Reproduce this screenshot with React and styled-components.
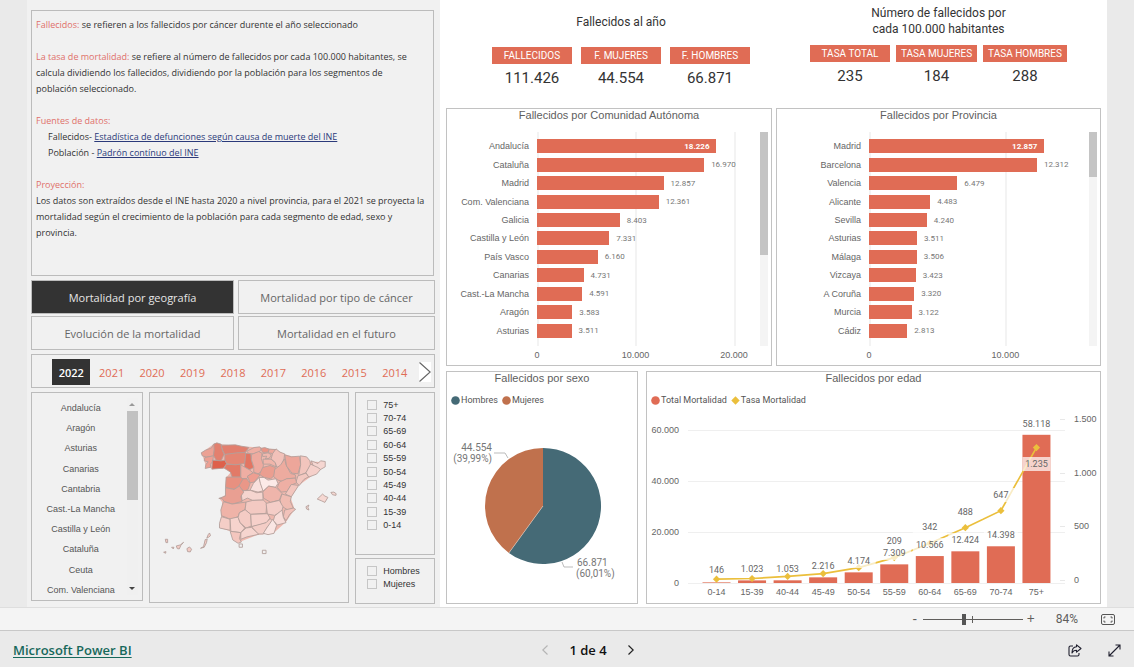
import React from "react";
import styled, { createGlobalStyle, css } from "styled-components";

const coral = "#e06c55";
const ui = '"Open Sans", "Noto Sans", sans-serif';
const din = 'Roboto, "Open Sans", sans-serif';
const arial = '"Liberation Sans", Arial, sans-serif';

const GlobalStyle = createGlobalStyle`
  *, *::before, *::after { box-sizing: border-box; }
  body { margin: 0; background: #eaeaea; font-family: ${ui}; color: #333; }
  h2, p, ul, dl, dd, dt, fieldset { margin: 0; padding: 0; border: 0; }
  ul { list-style: none; }
  button { font: inherit; color: inherit; background: none; border: 0; padding: 0; cursor: pointer; }
  svg { display: block; }
`;

const Page = styled.div`
  min-height: 100vh;
  display: flex;
  flex-direction: column;
`;

const Report = styled.main`
  flex: 1;
  display: grid;
  grid-template-columns: 413fr 667fr;
  padding: 0 27px;
`;

const Sidebar = styled.section`
  background: #f1f1f1;
  padding: 10px 5px 3px 4px;
  display: flex;
  flex-direction: column;
  gap: 4px;
`;

const box = css`
  border: 1px solid #bcbcbc;
`;

const InfoBox = styled.article`
  ${box}
  min-height: 266px;
  margin-right: 1px;
  padding: 6px 2px 6px 4px;
  font-size: 9px;
  line-height: 16px;
  color: #333;
`;

const InfoText = styled.p`
  margin-bottom: 16px;
`;

const Term = styled.strong`
  font-weight: 500;
  color: #e0706a;
`;

const Source = styled.span`
  display: block;
  padding-left: 12px;
`;

const SourceLink = styled.a`
  color: #2b3a7a;
`;

const TabGrid = styled.nav`
  display: grid;
  grid-template-columns: 203fr 197fr;
  grid-auto-rows: 34px;
  gap: 2px 4px;
`;

const TabButton = styled.button`
  ${box}
  font-size: 11px;
  color: ${(p) => (p.$active ? "#e6e6e6" : "#666")};
  background: ${(p) => (p.$active ? "#333" : "transparent")};
`;

const YearBar = styled.div`
  ${box}
  height: 34px;
  display: flex;
  align-items: center;
  padding: 2px 3px 0 20px;
`;

const YearList = styled.div`
  flex: 1;
  display: flex;
  gap: 2px;
  margin-right: 5px;
`;

const YearButton = styled.button`
  flex: 1;
  height: 26px;
  font-size: 11px;
  font-weight: ${(p) => (p.$active ? 600 : 400)};
  color: ${(p) => (p.$active ? "#fff" : coral)};
  background: ${(p) => (p.$active ? "#333" : "transparent")};
`;

const NextYears = styled.button`
  background: #fff;
`;

const FilterRow = styled.div`
  flex: 1;
  display: grid;
  grid-template-columns: 112fr 201fr 80fr;
  gap: 6px;
`;

const RegionBox = styled.div`
  ${box}
  display: flex;
  margin-bottom: 3px;
  padding: 5px 4px 0 3px;
`;

const RegionList = styled.ul`
  flex: 1;
  display: grid;
  grid-template-rows: repeat(10, 1fr);
`;

const RegionItem = styled.li`
  display: grid;
`;

const RegionButton = styled.button`
  font: 9px ${arial};
  color: #555;
`;

const RegionScroll = styled.div`
  width: 11px;
  display: flex;
  flex-direction: column;
  align-items: center;
  margin-bottom: 5px;
  padding: 5px 0;
  background: #f0f0f0;
`;

const RegionThumb = styled.div`
  width: 11px;
  height: 89px;
  margin: 5px 0 auto;
  background: #c1c1c1;
`;

const Arrow = styled.span`
  border: 3px solid transparent;
  border-top-width: ${(p) => (p.$up ? 0 : "3px")};
  border-bottom-width: ${(p) => (p.$up ? "3px" : 0)};
  border-top-color: ${(p) => (p.$up ? "transparent" : "#444")};
  border-bottom-color: ${(p) => (p.$up ? "#999" : "transparent")};
`;

const MapBox = styled.div`
  ${box}
  margin-bottom: 1px;
`;

const CheckColumn = styled.div`
  display: flex;
  flex-direction: column;
  gap: 3px;
`;

const CheckBox = styled.fieldset`
  && {
    ${box}
    padding: 5px 0 ${(p) => (p.$grow ? 0 : "12px")} 11px;
  }
  flex: ${(p) => (p.$grow ? 1 : "none")};
  min-width: 0;
`;

const CheckList = styled.div`
  display: grid;
  grid-template-rows: ${(p) => `repeat(${p.$rows}, 1fr)`};
  height: ${(p) => (p.$rows === 10 ? "134px" : "27px")};
`;

const CheckLabel = styled.label`
  display: flex;
  align-items: center;
  gap: 6px;
  font: 9px ${arial};
  color: #333;
`;

const Check = styled.input`
  appearance: none;
  width: 10px;
  height: 10px;
  margin: 0;
  border: 1px solid #c6c6c6;
`;

const Main = styled.section`
  background: #fff;
  padding: 0 6px 3px;
  display: flex;
  flex-direction: column;
`;

const Kpis = styled.div`
  min-height: 108px;
  display: flex;
  justify-content: space-between;
  padding: 5px 34px 0 46px;
`;

const KpiGroup = styled.section`
  display: flex;
  flex-direction: column;
  align-items: center;
`;

const KpiTitle = styled.h2`
  height: ${(p) => (p.$tall ? "40px" : "42px")};
  padding-top: ${(p) => (p.$tall ? 0 : "9px")};
  font: 12px/16px ${din};
  text-align: center;
  color: #333;
  max-width: 150px;
`;

const KpiCards = styled.dl`
  display: grid;
  grid-template-columns: ${(p) => p.$columns};
  gap: ${(p) => p.$gap};
`;

const KpiCard = styled.div`
  text-align: center;
`;

const KpiName = styled.dt`
  background: ${coral};
  color: #fff;
  font: 10px/17px ${din};
`;

const KpiValue = styled.dd`
  margin-top: 6px;
  font: 15px/17px ${din};
  color: #333;
`;

const ChartRow = styled.div`
  display: grid;
  grid-template-columns: ${(p) => p.$columns};
  gap: ${(p) => p.$gap};
  margin-bottom: ${(p) => p.$after || 0};
`;

const Panel = styled.section`
  border: 1px solid #c2c2c2;
  min-width: 0;
`;

const PanelTitle = styled.h2`
  font: 11px/13px ${arial};
  text-align: center;
  color: #5e5e5e;
`;

const BarBody = styled.div`
  display: grid;
  grid-template-columns: ${(p) => p.$label} 1fr 8px;
  grid-template-rows: 214px 19px;
  padding: 10px 3px 0 0;
`;

const GridLayer = styled.div`
  grid-area: 1 / 2 / 3 / 3;
  display: flex;
  margin-right: 2px;
`;

const Tick = styled.div`
  flex: none;
  display: flex;
  flex-direction: column;
`;

const TickLine = styled.span`
  height: 214px;
  border-left: 2px solid #f3f3f3;
`;

const TickText = styled.span`
  width: 0;
  display: flex;
  justify-content: center;
  font: 9px/18px ${arial};
  color: #666;
`;

const Rows = styled.ul`
  grid-area: 1 / 1 / 2 / 3;
  display: grid;
  grid-auto-rows: 1fr;
  margin-right: 2px;
  && { padding: 5px 0 6px; }
`;

const Row = styled.li`
  display: grid;
  grid-template-columns: ${(p) => p.$label} 1fr;
  align-items: center;
`;

const RowName = styled.span`
  padding-right: 8px;
  text-align: right;
  font: 9px ${arial};
  color: #666;
`;

const RowTrack = styled.span`
  display: flex;
  align-items: center;
`;

const Bar = styled.span`
  flex: none;
  height: 14px;
  display: flex;
  align-items: center;
  justify-content: flex-end;
  padding-right: 7px;
  background: ${coral};
  font: bold 8px ${din};
  color: #fff;
`;

const BarValue = styled.span`
  margin-left: 7px;
  font: 8px ${din};
  color: #777;
`;

const ScrollTrack = styled.div`
  grid-area: 1 / 3 / 2 / 4;
  background: #f4f4f4;
`;

const ScrollThumb = styled.div`
  width: 8px;
  height: ${(p) => p.$height};
  background: #c4c4c4;
`;

const Legend = styled.ul`
  display: flex;
  gap: 4px;
  && { margin: 9px 0 4px 4px; }
`;

const LegendItem = styled.li`
  display: flex;
  align-items: center;
  gap: 1px;
  font: 9px/12px ${din};
  color: #555;
`;

const StatusBar = styled.div`
  height: 24px;
  display: flex;
  align-items: center;
  justify-content: flex-end;
  padding: 0 19px;
  background: #f4f4f4;
  border-top: 1px solid #dedede;
  border-bottom: 1px solid #c8c8c8;
  font-size: 12px;
  color: #605e5c;
`;

const ZoomStep = styled.button`
  width: 16px;
  height: 20px;
  font-size: 14px;
  line-height: 18px;
`;

const ZoomRange = styled.input`
  appearance: none;
  width: 100px;
  height: 11px;
  margin: 0;
  background:
    linear-gradient(#605e5c, #605e5c) 49px 2px / 1px 7px no-repeat,
    linear-gradient(#605e5c, #605e5c) 0 5px / 100% 1px no-repeat;
  &::-webkit-slider-thumb {
    appearance: none;
    width: 4px;
    height: 11px;
    background: #555;
  }
`;

const ZoomValue = styled.output`
  margin: 0 23px 0 17px;
  font: 12px ${din};
`;

const Footer = styled.footer`
  height: 36px;
  display: grid;
  grid-template-columns: 1fr auto 1fr;
  align-items: center;
  padding: 2px 13px 0;
`;

const BrandLink = styled.a`
  justify-self: start;
  font-size: 13px;
  font-weight: 600;
  color: #17685b;
  text-underline-offset: 2px;
`;

const Pager = styled.nav`
  display: flex;
  align-items: center;
  gap: 21px;
  padding-left: 42px;
  font-size: 13px;
  font-weight: 600;
  color: #111;
`;

const Actions = styled.div`
  justify-self: end;
  display: flex;
  gap: 26px;
`;

const communities = [
  ["Andalucía", 18226], ["Cataluña", 16970], ["Madrid", 12857], ["Com. Valenciana", 12361],
  ["Galicia", 8403], ["Castilla y León", 7331], ["País Vasco", 6160], ["Canarias", 4731],
  ["Cast.-La Mancha", 4591], ["Aragón", 3583], ["Asturias", 3511],
];

const provinces = [
  ["Madrid", 12857], ["Barcelona", 12312], ["Valencia", 6479], ["Alicante", 4483],
  ["Sevilla", 4240], ["Asturias", 3511], ["Málaga", 3506], ["Vizcaya", 3423],
  ["A Coruña", 3320], ["Murcia", 3122], ["Cádiz", 2813],
];

const regions = [
  "Andalucía", "Aragón", "Asturias", "Canarias", "Cantabria",
  "Cast.-La Mancha", "Castilla y León", "Cataluña", "Ceuta", "Com. Valenciana",
];

const years = [2022, 2021, 2020, 2019, 2018, 2017, 2016, 2015, 2014];
const ageFilters = ["75+", "70-74", "65-69", "60-64", "55-59", "50-54", "45-49", "40-44", "15-39", "0-14"];

/* age group, deaths, deaths label y, rate, rate label y */
const ages = [
  ["0-14", 146, 160, 8],
  ["15-39", 1023, 159, 14],
  ["40-44", 1053, 159, 33],
  ["45-49", 2216, 156, 60],
  ["50-54", 4174, 151, 115],
  ["55-59", 7309, 143, 209, 131],
  ["60-64", 10566, 135, 342, 117],
  ["65-69", 12424, 130, 488, 102],
  ["70-74", 14398, 125, 647, 85],
  ["75+", 58118, 14, 1235, 54],
];

const fmt = (n) => String(n).replace(/\B(?=(\d{3})+$)/g, ".");

function BarChart({ title, data, domain, ticks, label, thumb }) {
  return (
    <Panel>
      <PanelTitle>{title}</PanelTitle>
      <BarBody $label={label}>
        <GridLayer>
          {ticks.map((t) => (
            <Tick key={t} style={{ width: `${(10000 / domain) * 100}%` }}>
              <TickLine />
              <TickText>{fmt(t)}</TickText>
            </Tick>
          ))}
        </GridLayer>
        <Rows>
          {data.map(([name, value], i) => (
            <Row key={name} $label={label}>
              <RowName>{name}</RowName>
              <RowTrack>
                <Bar style={{ width: `${(value / domain) * 100}%` }}>{i === 0 && fmt(value)}</Bar>
                {i > 0 && <BarValue>{fmt(value)}</BarValue>}
              </RowTrack>
            </Row>
          ))}
        </Rows>
        <ScrollTrack><ScrollThumb $height={thumb} /></ScrollTrack>
      </BarBody>
    </Panel>
  );
}

function PieChart() {
  const text = { fontFamily: "Roboto", fontSize: 10, fill: "#777", dominantBaseline: "central" };
  return (
    <svg viewBox="0 0 190 193" width="100%" role="img" aria-label="Fallecidos por sexo">
      <path d="M96 96V38A58 58 0 1 1 61.9 142.9Z" fill="#456a76" />
      <path d="M96 96L61.9 142.9A58 58 0 0 1 96 38Z" fill="#c0714d" />
      <path d="M96 96L61.9 142.9" stroke="#d9c9c0" strokeWidth=".6" />
      <path d="M47 43H58L61 48M115 152L117 157H126" fill="none" stroke="#bbb" />
      <text x="45" y="37" textAnchor="end" {...text}>44.554</text>
      <text x="45" y="48" textAnchor="end" {...text}>(39,99%)</text>
      <text x="130" y="152" {...text}>66.871</text>
      <text x="129" y="163" {...text}>(60,01%)</text>
    </svg>
  );
}

function AgeChart() {
  const x = (i) => 69.5 + 35.55 * i;
  const yBar = (v) => 173 - v * 0.00255;
  const yRate = (v) => 170 - v * 0.1072;
  const axis = { fontFamily: "Liberation Sans", fontSize: 9, fill: "#666", dominantBaseline: "central" };
  const value = { fontFamily: "Roboto", fontSize: 9, fill: "#666", textAnchor: "middle", dominantBaseline: "central" };
  return (
    <svg viewBox="0 0 453 193" width="100%" role="img" aria-label="Fallecidos por edad">
      {[0, 20000, 40000, 60000].map((t) => (
        <g key={t}>
          <path d={`M41 ${yBar(t) + 0.5}H418`} stroke="#efefef" />
          <text x="32" y={yBar(t)} textAnchor="end" {...axis}>{fmt(t)}</text>
        </g>
      ))}
      {[0, 500, 1000, 1500].map((t) => (
        <g key={t}>
          <path d={`M413 ${Math.round(yRate(t)) + 0.5}H418`} stroke="#e8e8e8" />
          <text x="427" y={yRate(t)} {...axis}>{fmt(t)}</text>
        </g>
      ))}
      {ages.map(([name, v], i) => (
        <g key={name}>
          <rect x={x(i) - 14} y={Math.min(yBar(v), 172)} width="28" height={Math.max(v * 0.00255, 1)} fill={v < 500 ? "#eba393" : coral} />
          <text x={x(i)} y="182" textAnchor="middle" {...axis}>{name}</text>
        </g>
      ))}
      <polyline points={ages.map((a, i) => `${x(i)},${yRate(a[3])}`).join(" ")} fill="none" stroke="#ebbf3c" strokeWidth="1.7" />
      {ages.map((a, i) => (
        <path key={a[0]} d={`M${x(i)} ${yRate(a[3]) - 3.6}l3.6 3.6l-3.6 3.6l-3.6 -3.6z`} fill="#ebbf3c" />
      ))}
      {ages.map(([name, v, ly, rate, ry], i) => (
        <g key={name}>
          {i > 3 && i < 9 && <rect x={x(i) - 17} y={ly - 7} width="34" height="14" fill="#fff" opacity=".7" />}
          {ry && <rect x={x(i) - (i === 9 ? 14 : 17)} y={ry - 7} width={i === 9 ? 28 : 34} height="14" fill="#fff" opacity=".7" />}
          <text x={x(i)} y={ly} {...value}>{fmt(v)}</text>
          {ry && <text x={x(i)} y={ry} {...value}>{fmt(rate)}</text>}
        </g>
      ))}
    </svg>
  );
}

const mainland =
  "170,204 206,178 229,178 290,184 348,188 394,194 420,208 498,230 542,232 528,254 462,302 438,340 450,374 424,412 386,446 340,450 280,474 258,440 226,430 232,352 224,342 242,330 244,278 258,262 240,250 204,252 184,246";

const mapShapes = [
  ["#eca194", "169,204 182,196 200,189 206,178 214,176 208,198 206,213 186,217 172,213"],
  ["#e3806e", "207,178 216,174 229,178 232,195 238,208 229,228 214,226 206,212 208,196"],
  ["#ee9f92", "180,218 206,213 203,232 196,238 198,247 181,251 183,239 190,231 178,228"],
  ["#de604b", "203,226 229,228 240,226 246,236 236,250 201,253"],
  ["#e27f6e", "229,181 272,180 290,184 312,188 302,202 276,205 240,209 234,197"],
  ["#e48674", "240,209 276,204 302,203 303,212 300,236 272,240 246,237 240,226"],
  ["#e27a67", "245,238 272,240 288,238 288,277 262,277 257,262 246,255 238,250"],
  ["#e37562", "303,206 318,205 320,225 327,248 314,255 299,247"],
  ["#efaea3", "306,199 328,188 345,186 350,192 344,201 326,207 312,206"],
  ["#eeaa9f", "320,209 342,200 352,205 350,222 356,240 354,258 340,267 327,262 327,246 320,225"],
  ["#ea9486", "348,191 360,188 374,193 370,202 354,203"],
  ["#efa89c", "374,193 394,194 384,206 370,204"],
  ["#f0b8ae", "353,207 370,204 380,210 374,220 362,223 366,214 354,215"],
  ["#f2c1b9", "394,192 406,202 420,207 418,222 408,246 396,247 392,234 379,222 384,206"],
  ["#f0b5aa", "355,223 379,223 392,234 394,246 376,238 356,238"],
  ["#eb9e90", "354,248 376,242 392,248 389,272 378,282 358,278 344,269"],
  ["#efaea3", "288,240 300,247 314,255 325,264 312,272 306,282 288,281"],
  ["#ee9e91", "308,274 326,264 346,270 340,278 328,292 316,294"],
  ["#ea9788", "290,282 306,282 316,296 310,314 297,320 282,304"],
  ["#e89080", "244,277 288,277 294,284 282,304 268,314 242,308"],
  ["#f9e0dc", "343,278 348,296 356,318 340,322 316,316 326,296"],
  ["#fceae7", "343,278 358,278 370,286 394,282 400,296 392,308 372,304 355,319 347,296"],
  ["#edab9f", "408,240 420,222 424,240 438,266 452,270 454,280 426,282 414,290 400,286 387,276 390,254"],
  ["#eda69a", "420,210 440,216 465,214 468,240 460,267 442,265 426,244"],
  ["#f2c5bd", "467,213 486,216 496,228 498,242 484,264 462,273 468,240"],
  ["#f5d6d1", "500,228 520,236 528,228 542,230 542,246 528,254 508,248"],
  ["#f5d0ca", "498,238 520,248 528,254 516,268 492,277 484,264"],
  ["#f3c8c0", "460,273 484,265 492,276 478,284 464,302 454,292"],
  ["#eeafa4", "404,292 426,282 452,280 456,294 438,302 428,320 410,322 398,308"],
  ["#f3c5bd", "440,299 462,302 440,336 422,328"],
  ["#efb5ab", "372,304 394,308 412,326 404,346 378,353 356,340 354,322"],
  ["#f0bcb2", "412,328 440,336 437,350 446,370 430,376 410,364 406,346"],
  ["#f2c2ba", "420,376 446,370 453,374 436,388 424,408 416,396"],
  ["#f5d5cf", "288,318 318,317 336,324 354,322 355,346 324,347 308,340 292,348"],
  ["#e99f92", "242,309 268,314 284,304 297,322 288,335 292,350 262,358 238,350 232,342 222,341 242,334"],
  ["#efb3a8", "236,351 262,358 304,352 301,374 284,384 280,396 258,404 230,393 228,376"],
  ["#f3c9c2", "304,352 324,347 356,346 366,356 364,386 318,389 301,375"],
  ["#f4cdc7", "364,356 404,347 415,366 412,378 390,392 368,388"],
  ["#f8dcd8", "390,394 412,376 416,398 424,414 398,421 386,408"],
  ["#f5cec7", "230,396 256,404 256,437 224,430 224,416"],
  ["#f6d3cd", "256,402 280,397 286,414 300,430 288,444 258,440"],
  ["#f4cbc4", "284,384 301,375 318,389 320,424 304,430 286,414 280,398"],
  ["#f6d0ca", "318,389 368,387 376,400 366,414 340,422 320,426"],
  ["#f4cdc6", "320,426 364,414 376,402 384,408 366,430 356,448 340,448"],
  ["#fae6e3", "384,404 396,422 388,446 370,450 356,446 366,430"],
  ["#f6d5cf", "304,430 320,428 342,449 306,457 288,464 288,444"],
  ["#f4c6be", "256,440 288,444 284,462 290,472 280,476 264,466"],
  ["#f6d8d2", "518,343 534,328 541,334 550,338 541,353 530,348"],
  ["#f6d8d2", "559,323 568,322 575,327 574,332 564,330"],
  ["#f6d8d2", "484,366 493,361 490,368 493,376 486,373"],
  ["#f4cbc4", "61,464 68,464 68,474 63,474"],
  ["#f4cbc4", "56,503 63,501 62,506"],
  ["#f4cbc4", "80,488 87,488 85,493"],
  ["#f4cbc4", "94,484 106,481 116,473 108,482 103,493 97,492"],
  ["#f4cbc4", "126,492 134,487 140,494 136,502 128,501"],
  ["#f4cbc4", "167,491 176,486 181,465 187,463 185,474 178,488"],
  ["#f4cbc4", "186,460 190,450 194,445 197,453 191,458"],
  ["#f1f1f1", "283,478 293,478 293,488 283,488"],
  ["#f1f1f1", "353,497 364,497 364,507 353,507"],
];

function SpainMap() {
  return (
    <svg viewBox="15 24 597 624" width="100%" role="img" aria-label="Mapa de mortalidad por provincia">
      <polygon points={mainland} fill="#efb8ae" />
      {mapShapes.map(([fill, points], i) => (
        <polygon key={i} points={points} fill={fill} stroke="#b39f9a" strokeWidth="2.6" strokeLinejoin="round" />
      ))}
    </svg>
  );
}

function Chevron({ left, color = "#333", w = 6, h = 10 }) {
  return (
    <svg width={w} height={h} viewBox={`0 0 ${w} ${h}`} fill="none" stroke={color} strokeWidth="1.2" aria-hidden="true">
      <path d={left ? `M${w - 0.5} .5L.8 ${h / 2}L${w - 0.5} ${h - 0.5}` : `M.5 .5L${w - 0.8} ${h / 2}L.5 ${h - 0.5}`} />
    </svg>
  );
}

function Checks({ items, name, grow }) {
  return (
    <CheckBox $grow={grow} aria-label={name}>
      <CheckList $rows={items.length}>
        {items.map((t) => (
          <CheckLabel key={t}><Check type="checkbox" />{t}</CheckLabel>
        ))}
      </CheckList>
    </CheckBox>
  );
}

function KpiSet({ title, tall, items, columns, gap }) {
  return (
    <KpiGroup>
      <KpiTitle $tall={tall}>{title}</KpiTitle>
      <KpiCards $columns={columns} $gap={gap}>
        {items.map(([n, v]) => (
          <KpiCard key={n}><KpiName>{n}</KpiName><KpiValue>{v}</KpiValue></KpiCard>
        ))}
      </KpiCards>
    </KpiGroup>
  );
}

const Dot = ({ color }) => (
  <svg width="9" height="9" viewBox="0 0 9 9" aria-hidden="true"><circle cx="4.5" cy="4.5" r="4.3" fill={color} /></svg>
);

export default function App() {
  return (
    <Page>
      <GlobalStyle />
      <Report>
        <Sidebar>
          <InfoBox>
            <InfoText><Term>Fallecidos:</Term> se refieren a los fallecidos por cáncer durente el año seleccionado</InfoText>
            <InfoText><Term>La tasa de mortalidad:</Term> se refiere al número de fallecidos por cada 100.000 habitantes, se calcula dividiendo los fallecidos, dividiendo por la población para los segmentos de población&nbsp;seleccionado.</InfoText>
            <InfoText as="div">
              <Term>Fuentes de datos:</Term>
              <Source>Fallecidos- <SourceLink href="#defunciones">Estadística de defunciones según causa de muerte del INE</SourceLink></Source>
              <Source>Población - <SourceLink href="#padron">Padrón contínuo del INE</SourceLink></Source>
            </InfoText>
            <InfoText><Term>Proyección:</Term><br />Los datos son extraídos desde el INE hasta 2020 a nivel provincia, para el 2021 se proyecta la mortalidad según el crecimiento de la población para cada segmento de edad, sexo y provincia.</InfoText>
          </InfoBox>
          <TabGrid>
            <TabButton $active>Mortalidad por geografía</TabButton>
            <TabButton>Mortalidad por tipo de cáncer</TabButton>
            <TabButton>Evolución de la mortalidad</TabButton>
            <TabButton>Mortalidad en el futuro</TabButton>
          </TabGrid>
          <YearBar>
            <YearList>
              {years.map((y) => <YearButton key={y} $active={y === 2022}>{y}</YearButton>)}
            </YearList>
            <NextYears aria-label="Más años"><Chevron w={12} h={20} color="#666" /></NextYears>
          </YearBar>
          <FilterRow>
            <RegionBox>
              <RegionList>
                {regions.map((r) => <RegionItem key={r}><RegionButton>{r}</RegionButton></RegionItem>)}
              </RegionList>
              <RegionScroll><Arrow $up /><RegionThumb /><Arrow /></RegionScroll>
            </RegionBox>
            <MapBox><SpainMap /></MapBox>
            <CheckColumn>
              <Checks name="Edad" items={ageFilters} grow />
              <Checks name="Sexo" items={["Hombres", "Mujeres"]} />
            </CheckColumn>
          </FilterRow>
        </Sidebar>
        <Main>
          <Kpis>
            <KpiSet
              title="Fallecidos al año"
              columns="80px 80px 80px"
              gap="9px"
              items={[["FALLECIDOS", "111.426"], ["F. MUJERES", "44.554"], ["F. HOMBRES", "66.871"]]}
            />
            <KpiSet
              title="Número de fallecidos por cada 100.000 habitantes"
              tall
              columns="80px 81px 84px"
              gap="6px"
              items={[["TASA TOTAL", "235"], ["TASA MUJERES", "184"], ["TASA HOMBRES", "288"]]}
            />
          </Kpis>
          <ChartRow $columns="326fr 325fr" $gap="4px" $after="5px">
            <BarChart title="Fallecidos por Comunidad Autónoma" data={communities} domain={22440} ticks={[0, 10000, 20000]} label="90px" thumb="123px" />
            <BarChart title="Fallecidos por Provincia" data={provinces} domain={15985} ticks={[0, 10000]} label="92px" thumb="45px" />
          </ChartRow>
          <ChartRow $columns="192fr 455fr" $gap="8px">
            <Panel>
              <PanelTitle>Fallecidos por sexo</PanelTitle>
              <Legend>
                <LegendItem><Dot color="#456a76" />Hombres</LegendItem>
                <LegendItem><Dot color="#c0714d" />Mujeres</LegendItem>
              </Legend>
              <PieChart />
            </Panel>
            <Panel>
              <PanelTitle>Fallecidos por edad</PanelTitle>
              <Legend>
                <LegendItem><Dot color={coral} />Total Mortalidad</LegendItem>
                <LegendItem>
                  <svg width="9" height="9" viewBox="0 0 9 9" aria-hidden="true"><path d="M4.5 .3L8.7 4.5L4.5 8.7L.3 4.5z" fill="#ebbf3c" /></svg>
                  Tasa Mortalidad
                </LegendItem>
              </Legend>
              <AgeChart />
            </Panel>
          </ChartRow>
        </Main>
      </Report>
      <StatusBar>
        <ZoomStep aria-label="Alejar">-</ZoomStep>
        <ZoomRange type="range" min="0" max="100" defaultValue="41" aria-label="Zoom" />
        <ZoomStep aria-label="Acercar">+</ZoomStep>
        <ZoomValue>84%</ZoomValue>
        <button aria-label="Ajustar a la página">
          <svg width="14" height="11" viewBox="0 0 14 11" fill="none" stroke="#555" aria-hidden="true">
            <rect x=".5" y=".5" width="13" height="10" rx="1.5" />
            <path d="M3 4.5V3h1.5M9.5 3H11v1.5M11 6.5V8H9.5M4.5 8H3V6.5" />
          </svg>
        </button>
      </StatusBar>
      <Footer>
        <BrandLink href="#powerbi">Microsoft Power BI</BrandLink>
        <Pager aria-label="Páginas">
          <button aria-label="Página anterior" disabled><Chevron left color="#b5b5b5" /></button>
          <span>1 de 4</span>
          <button aria-label="Página siguiente"><Chevron color="#222" /></button>
        </Pager>
        <Actions>
          <button aria-label="Compartir">
            <svg width="14" height="13" viewBox="0 0 14 13" fill="none" stroke="#1f1f2e" strokeWidth="1.1" strokeLinejoin="round" aria-hidden="true">
              <path d="M5 2H2.5A1.5 1.5 0 0 0 1 3.5V10.5A1.5 1.5 0 0 0 2.5 12H9.5A1.5 1.5 0 0 0 11 10.5V9" />
              <path d="M8.5 .8L13 4.5L8.5 8.2V6.2C6 6.2 4.8 7.2 4 9C4 5.5 5.5 3 8.5 2.8Z" />
            </svg>
          </button>
          <button aria-label="Pantalla completa">
            <svg width="13" height="13" viewBox="0 0 13 13" fill="none" stroke="#1f1f2e" strokeWidth="1.1" aria-hidden="true">
              <path d="M12 1L1 12M7.5 1H12V5.5M1 7.5V12H5.5" />
            </svg>
          </button>
        </Actions>
      </Footer>
    </Page>
  );
}
